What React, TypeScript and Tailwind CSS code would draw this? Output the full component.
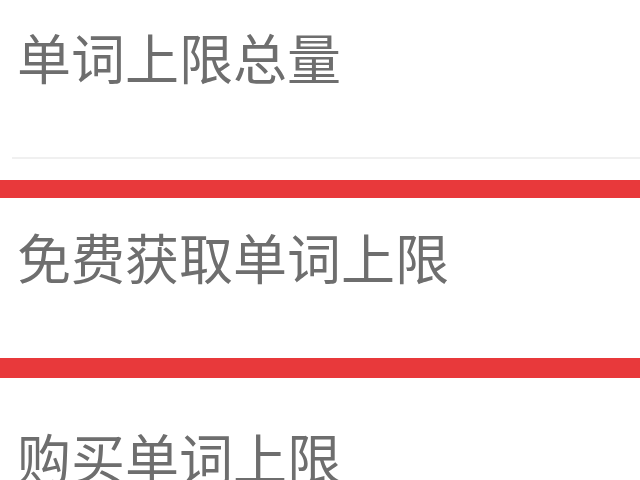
export default function App() {
  const font = { fontFamily: '"Noto Sans CJK SC", "Noto Sans", sans-serif' };
  return (
    <div className="w-[640px] h-[480px] overflow-hidden bg-white" style={font}>
      <div className="h-[157px] pl-[17px] pt-[25px]">
        <div className="text-[54px] leading-[64px] text-[#6e6e6e]">单词上限总量</div>
      </div>
      <div className="ml-[12px] h-[2px] bg-[#f0f0f0]" />
      <div className="h-[21px]" />
      <div className="border-t-[18px] border-b-[20px] border-[#e8393b]">
        <div className="h-[160px] pl-[17px] pt-[27px]">
          <div className="text-[54px] leading-[64px] text-[#6e6e6e]">免费获取单词上限</div>
        </div>
      </div>
      <div className="pl-[17px] pt-[47px]">
        <div className="text-[54px] leading-[64px] text-[#6e6e6e]">购买单词上限</div>
      </div>
    </div>
  );
}
